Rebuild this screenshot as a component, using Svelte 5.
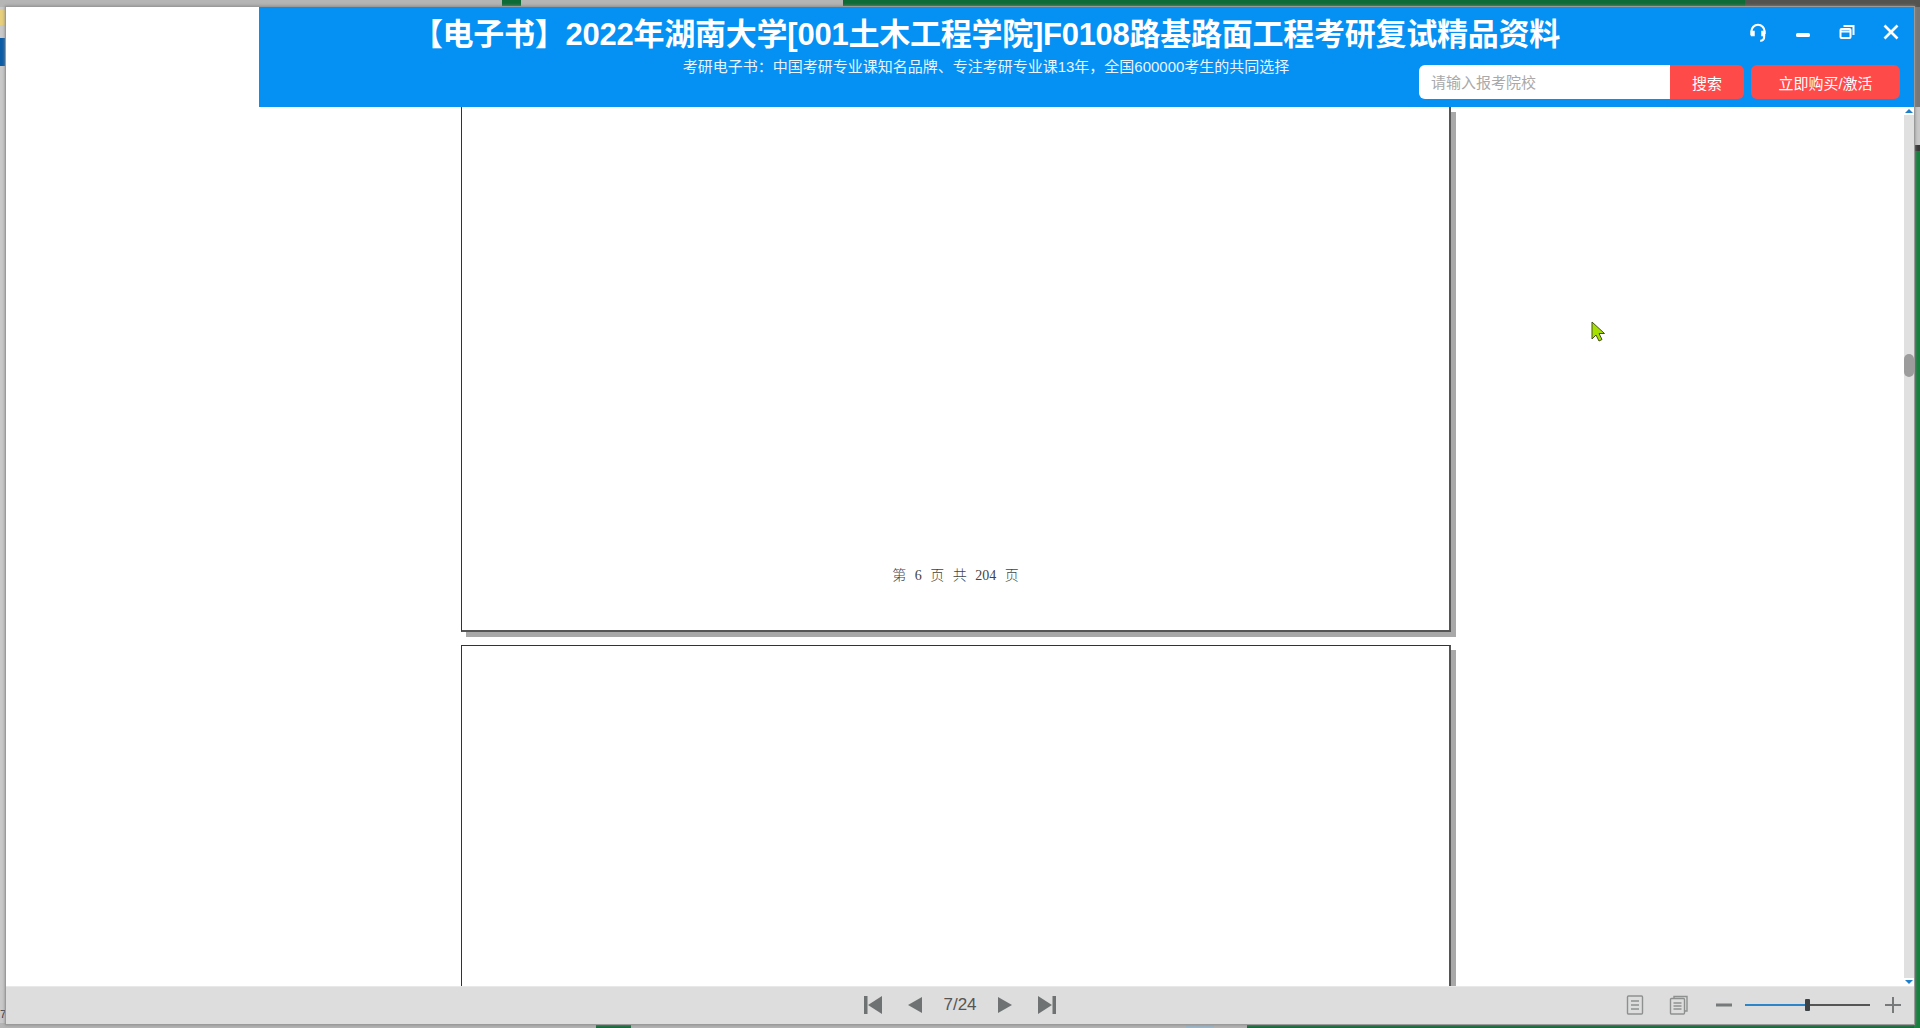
<script>
  let title = "【电子书】2022年湖南大学[001土木工程学院]F0108路基路面工程考研复试精品资料";
  let slogan = "考研电子书：中国考研专业课知名品牌、专注考研专业课13年，全国600000考生的共同选择";
  let keyword = "";
  let current = 7;
  let total = 24;
</script>

<div class="desktop">
  <div class="top-strip">
    <span class="grey t1"></span>
    <span class="green t2"></span>
    <span class="grey t3"></span>
    <span class="green t4"></span>
    <span class="dark t5"></span>
  </div>
  <div class="bottom-strip">
    <span class="grey b1"></span>
    <span class="green b2"></span>
    <span class="grey b3"></span>
    <span class="pale b4"></span>
    <span class="grey b5"></span>
    <span class="green b6"></span>
  </div>
  <div class="left-bits">
    <span class="bit-yellow"></span>
    <span class="bit-blue"></span>
    <span class="bit-seven">7</span>
  </div>
  <div class="right-strip"></div>

  <div class="window">
    <div class="top-row">
      <header class="banner">
        <div class="heading">
          <h1>{title}</h1>
          <p>{slogan}</p>
        </div>
        <div class="controls">
          <div class="win-btns">
            <svg width="22" height="22" viewBox="0 0 20 20" fill="none" stroke="#fff" stroke-width="2">
              <path d="M4 12V8.500a6 6 0 0 1 12 0V11" />
              <path d="M15.500 10.500v3.500a3 3 0 0 1-3.500 3" />
              <path d="M4 8.500h2.500v4H4zM13.500 8.500H16v4h-2.500z" fill="#fff" stroke-width="1" />
            </svg>
            <svg width="20" height="20" viewBox="0 0 20 20" fill="#fff"><rect x="3" y="11" width="14" height="4" rx="1.500" /></svg>
            <svg width="20" height="20" viewBox="0 0 20 20" fill="none" stroke="#fff" stroke-width="2">
              <rect x="3.500" y="7" width="10" height="9" rx="1" />
              <path d="M6.500 4h10v9M3.500 9.500h10" />
            </svg>
            <svg width="20" height="20" viewBox="0 0 20 20" stroke="#fff" stroke-width="2.600"><path d="M3.500 3.500l13 13M16.500 3.500l-13 13" /></svg>
          </div>
          <div class="search-row">
            <input class="search-input" type="text" placeholder="请输入报考院校" bind:value={keyword} />
            <button class="search-btn">搜索</button>
            <button class="buy-btn">立即购买/激活</button>
          </div>
        </div>
      </header>
    </div>

    <div class="viewer">
      <div class="pages">
        <div class="page first">
          <span class="page-no">第 6 页 共 204 页</span>
        </div>
        <div class="page second"></div>
      </div>
      <div class="scrollbar">
        <span class="arrow up"></span>
        <div class="track"><span class="thumb"></span></div>
        <span class="arrow down"></span>
      </div>
      <svg class="cursor" width="14" height="22" viewBox="0 0 14 22">
        <path d="M1 1v17l4-4 3 6 3-1.500-3-6h5.500z" fill="#a6e000" stroke="#44501a" stroke-width="1" />
      </svg>
    </div>

    <footer class="toolbar">
      <div></div>
      <div class="pager">
        <svg width="20" height="20" viewBox="0 0 20 20" fill="#6f7273"><rect x="1" y="1" width="3.500" height="18" /><path d="M19 1v18L5 10z" /></svg>
        <svg width="16" height="18" viewBox="0 0 16 18" fill="#6f7273"><path d="M15 1v16L1 9z" /></svg>
        <span class="count">{current}/{total}</span>
        <svg width="16" height="18" viewBox="0 0 16 18" fill="#6f7273"><path d="M1 1v16l14-8z" /></svg>
        <svg width="20" height="20" viewBox="0 0 20 20" fill="#6f7273"><path d="M1 1v18l14-9z" /><rect x="15.500" y="1" width="3.500" height="18" /></svg>
      </div>
      <div class="zoom">
        <svg width="18" height="20" viewBox="0 0 18 20" fill="none" stroke="#8e9090" stroke-width="1.400">
          <rect x="1.500" y="1" width="15" height="18" rx="1" />
          <path d="M5 6h8M5 10h8M5 14h8" />
        </svg>
        <svg class="double-ic" width="20" height="20" viewBox="0 0 20 20" fill="none" stroke="#8e9090" stroke-width="1.400">
          <path d="M5 3V1.500h13V16h-2" />
          <rect x="1.500" y="3.500" width="14" height="15.500" rx="1" />
          <path d="M4.500 8h8M4.500 11h8M4.500 14h8" />
        </svg>
        <svg class="minus-ic" width="16" height="4" viewBox="0 0 16 4"><rect width="16" height="3" y="0.500" fill="#777a7b" /></svg>
        <div class="slider">
          <span class="slider-done"></span>
          <span class="slider-knob"></span>
          <span class="slider-rest"></span>
        </div>
        <svg width="16" height="16" viewBox="0 0 16 16" fill="#777a7b"><rect y="7" width="16" height="2" /><rect x="7" width="2" height="16" /></svg>
      </div>
    </footer>
  </div>
</div>

<style>
  :global(body) {
    margin: 0;
    overflow: hidden;
    font-family: "Liberation Sans", "Noto Sans CJK SC", sans-serif;
  }

  .desktop {
    position: relative;
    width: 1920px;
    height: 1028px;
    background: #c9c9c9;
    overflow: hidden;
  }

  .top-strip,
  .bottom-strip {
    position: absolute;
    left: 0;
    display: flex;
    width: 100%;
  }

  .top-strip {
    top: 0;
    height: 7px;
  }

  .bottom-strip {
    bottom: 0;
    height: 5px;
  }

  .t1 { width: 502px; }
  .t2 { width: 19px; }
  .t3 { width: 322px; }
  .t4 { width: 902px; }
  .t5 { width: 175px; }
  .b1 { width: 596px; }
  .b2 { width: 35px; }
  .b3 { width: 555px; }
  .b4 { width: 28px; }
  .b5 { width: 33px; }
  .b6 { width: 673px; }

  .grey {
    background: #b5b5b5;
  }

  .green {
    background: #0e6b35;
  }

  .dark {
    background: #55534f;
  }

  .pale {
    background: #9db9cc;
  }

  .left-bits span {
    position: absolute;
    left: 0;
  }

  .bit-yellow {
    top: 10px;
    width: 6px;
    height: 15px;
    background: #e8cf7c;
  }

  .bit-blue {
    top: 38px;
    width: 6px;
    height: 28px;
    background: #0b5ca6;
  }

  .bit-seven {
    top: 1008px;
    font-size: 11px;
    color: #334;
  }

  .right-strip {
    position: absolute;
    top: 7px;
    right: 0;
    width: 6px;
    bottom: 0;
    background: linear-gradient(#777 0, #777 100px, #c9c9c9 100px, #c9c9c9 138px, #3a3a3a 138px, #3a3a3a 144px, #17803f 144px);
  }

  .window {
    position: absolute;
    left: 6px;
    top: 7px;
    width: 1908px;
    height: 1017px;
    display: flex;
    flex-direction: column;
    background: #fff;
    box-shadow: 0 0 0 1px #9a9a9a, 0 0 3px 1px #888;
  }

  .top-row {
    padding-left: 253px;
  }

  .banner {
    position: relative;
    height: 100px;
    background: #0590f4;
    color: #fff;
  }

  .heading {
    width: 1454px;
    text-align: center;
  }

  h1 {
    margin: 0;
    padding-top: 6px;
    font-size: 31px;
    line-height: 44px;
    font-weight: 700;
    white-space: nowrap;
    letter-spacing: -0.25px;
  }

  .heading p {
    margin: 0;
    font-size: 15px;
    line-height: 20px;
    white-space: nowrap;
    color: #e8f4ff;
  }

  .controls {
    position: absolute;
    right: 14px;
    top: 0;
    width: 481px;
  }

  .win-btns {
    display: flex;
    justify-content: flex-end;
    align-items: flex-start;
    gap: 24px;
    height: 58px;
    padding-top: 15px;
    margin-right: -1px;
    box-sizing: border-box;
  }

  .search-row {
    display: flex;
  }

  .search-input {
    width: 251px;
    height: 34px;
    box-sizing: border-box;
    border: none;
    outline: none;
    padding: 0 12px;
    border-radius: 6px 0 0 6px;
    font: 15px "Liberation Sans", "Noto Sans CJK SC", sans-serif;
    background: #fff;
  }

  .search-input::placeholder {
    color: #a9a9a9;
  }

  .search-btn,
  .buy-btn {
    height: 34px;
    border: none;
    background: #ff4a4a;
    color: #fff;
    font: 15px "Liberation Sans", "Noto Sans CJK SC", sans-serif;
    padding: 0;
  }

  .search-btn {
    width: 74px;
    border-radius: 0 6px 6px 0;
    margin-right: 7px;
  }

  .buy-btn {
    width: 149px;
    border-radius: 6px;
  }

  .viewer {
    position: relative;
    flex: 1;
    min-height: 0;
    display: flex;
    overflow: hidden;
  }

  .pages {
    flex: 1;
    display: flex;
    flex-direction: column;
    align-items: flex-start;
    padding-left: 455px;
    gap: 13px;
  }

  .page {
    position: relative;
    width: 990px;
    box-sizing: border-box;
    border: 1px solid #333;
    border-right: 2px solid #555;
    border-bottom: 2px solid #555;
    background: #fff;
    box-shadow: 5px 5px 0 #a8a8a8;
    flex-shrink: 0;
  }

  .page.first {
    height: 525px;
    border-top: none;
    display: flex;
    justify-content: center;
    align-items: flex-end;
    padding-bottom: 46px;
  }

  .page-no {
    font-family: "Liberation Serif", "Noto Sans CJK SC", serif;
    font-size: 14px;
    font-weight: 300;
    line-height: 16px;
    word-spacing: 5px;
    color: #444;
  }

  .page.second {
    height: 400px;
  }

  .scrollbar {
    position: absolute;
    right: 0;
    top: 0;
    bottom: 0;
    width: 10px;
    display: flex;
    flex-direction: column;
    align-items: center;
  }

  .arrow {
    width: 0;
    height: 0;
    margin: 2px 0;
    border-left: 4px solid transparent;
    border-right: 4px solid transparent;
  }

  .arrow.up {
    border-bottom: 4px solid #1c7fc9;
  }

  .arrow.down {
    border-top: 4px solid #1c7fc9;
  }

  .track {
    flex: 1;
    width: 10px;
    background: #e0e0e0;
    padding-top: 239px;
    box-sizing: border-box;
  }

  .thumb {
    display: block;
    width: 10px;
    height: 23px;
    border-radius: 5px;
    background: #9c9c9c;
  }

  .cursor {
    position: absolute;
    left: 1585px;
    top: 214px;
  }

  .toolbar {
    height: 38px;
    flex-shrink: 0;
    padding-bottom: 2px;
    background: #dcdddc;
    border-top: 1px solid #e8e8e8;
    box-sizing: border-box;
    display: grid;
    grid-template-columns: 1fr auto 1fr;
    align-items: center;
  }

  .pager {
    display: flex;
    align-items: center;
    gap: 24px;
  }

  .count {
    font-size: 17px;
    color: #555;
    margin: 0 -4px;
  }

  .zoom {
    display: flex;
    align-items: center;
    justify-content: flex-end;
    padding-right: 13px;
  }

  .double-ic {
    margin-left: 25px;
  }

  .minus-ic {
    margin-left: 27px;
  }

  .slider {
    display: flex;
    align-items: center;
    margin: 0 15px 0 13px;
  }

  .slider-done {
    width: 60px;
    height: 2px;
    background: #2d85c9;
  }

  .slider-knob {
    width: 5px;
    height: 12px;
    border-radius: 1px;
    background: #3d4246;
  }

  .slider-rest {
    width: 60px;
    height: 2px;
    background: #555;
  }
</style>
